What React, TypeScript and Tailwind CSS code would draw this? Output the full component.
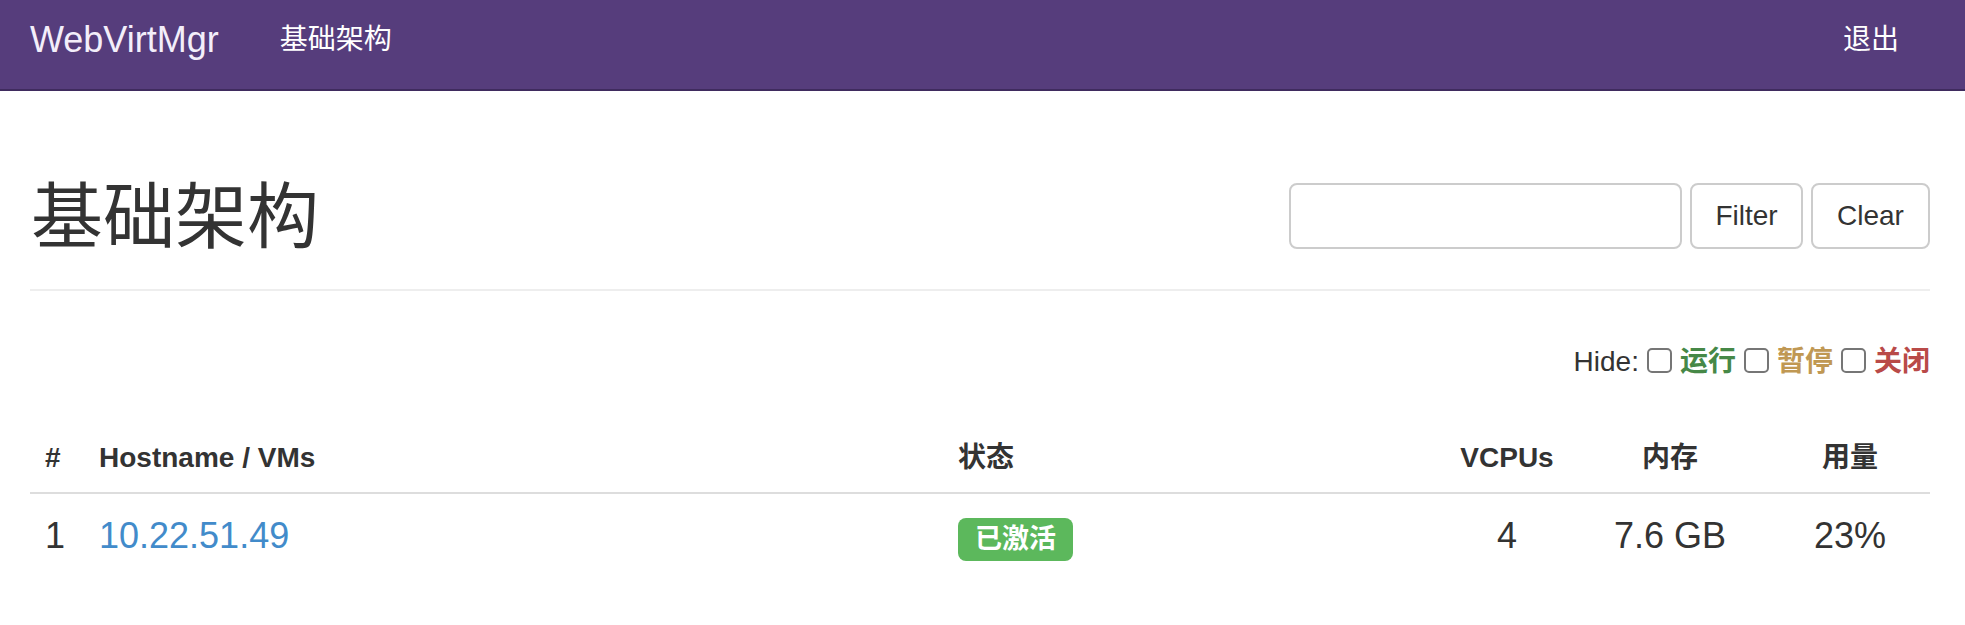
import React from "react";

const font = "font-['Liberation_Sans','Noto_Sans_CJK_SC',sans-serif]";

function Navbar() {
  return (
    <nav className="h-[91px] bg-[#563d7c] border-b-2 border-[#3f2b5e]">
      <div className="flex items-center h-full px-[30px] pb-[10px]">
        <a className="text-[36px] leading-none text-[#f3eefa]">WebVirtMgr</a>
        <a className="ml-[61px] text-[28px] leading-none text-white">基础架构</a>
        <a className="ml-auto mr-[36px] text-[28px] leading-none text-white">退出</a>
      </div>
    </nav>
  );
}

function PageHeader() {
  return (
    <div className="mt-[92px] flex items-center justify-between h-[66px]">
      <h1 className="text-[72px] leading-none text-[#333] mt-[1px] ml-[1px]">基础架构</h1>
      <div className="flex items-center gap-[8px]">
        <input
          type="text"
          className="w-[393px] h-[66px] border-2 border-[#ccc] rounded-[8px] px-[24px] text-[28px] outline-none"
        />
        <button className="h-[66px] w-[113px] border-2 border-[#ccc] rounded-[8px] text-[28px] text-[#333] bg-white">
          Filter
        </button>
        <button className="h-[66px] w-[119px] border-2 border-[#ccc] rounded-[8px] text-[28px] text-[#333] bg-white">
          Clear
        </button>
      </div>
    </div>
  );
}

function HideFilter({ label, color }: { label: string; color: string }) {
  return (
    <>
      <input
        type="checkbox"
        className="appearance-none w-[25px] h-[25px] border-2 border-[#767676] rounded-[5px] bg-white mt-[-4px]"
      />
      <span className={`font-bold ${color}`}>{label}</span>
    </>
  );
}

function HostTable() {
  return (
    <table className="w-full table-fixed mt-[38px] border-collapse">
      <colgroup>
        <col className="w-[53px]" />
        <col className="w-[859px]" />
        <col className="w-[502px]" />
        <col className="w-[126px]" />
        <col className="w-[200px]" />
        <col className="w-[160px]" />
      </colgroup>
      <thead>
        <tr className="border-b-2 border-[#ddd] text-[28px] leading-[40px] font-bold text-[#333]">
          <th className="text-left pt-[18px] pb-[14px] pl-[15px] pr-0 align-top">#</th>
          <th className="text-left pt-[18px] pb-[14px] px-[16px] align-top">Hostname / VMs</th>
          <th className="text-left pt-[18px] pb-[14px] px-[16px] align-top">状态</th>
          <th className="text-center pt-[18px] pb-[14px] px-0 align-top">VCPUs</th>
          <th className="text-center pt-[18px] pb-[14px] px-0 align-top">内存</th>
          <th className="text-center pt-[18px] pb-[14px] px-0 align-top">用量</th>
        </tr>
      </thead>
      <tbody>
        <tr className="text-[36px] leading-[51px] text-[#333]">
          <td className="py-[16px] pl-[15px] pr-0 align-top">1</td>
          <td className="p-[16px] align-top">
            <a className="text-[#428bca]">10.22.51.49</a>
          </td>
          <td className="p-[16px] align-top">
            <span className="inline-flex items-center align-top mt-[8px] h-[43px] px-[17px] rounded-[8px] bg-[#5cb85c] text-white font-bold text-[27px] leading-none">
              已激活
            </span>
          </td>
          <td className="text-center py-[16px] px-0 align-top">4</td>
          <td className="text-center py-[16px] px-0 align-top">7.6 GB</td>
          <td className="text-center py-[16px] px-0 align-top">23%</td>
        </tr>
      </tbody>
    </table>
  );
}

export default function App() {
  return (
    <div className={`${font} min-h-[625px] bg-white`}>
      <Navbar />
      <div className="pl-[30px] pr-[35px]">
        <PageHeader />
        <div className="mt-[40px] border-t-2 border-[#eee]" />
        <div className="mt-[51px] flex items-center justify-end gap-[8px] text-[28px] leading-[40px] text-[#333]">
          <span>Hide:</span>
          <HideFilter label="运行" color="text-[#468847]" />
          <HideFilter label="暂停" color="text-[#c09853]" />
          <HideFilter label="关闭" color="text-[#b94a48]" />
        </div>
        <HostTable />
      </div>
    </div>
  );
}
